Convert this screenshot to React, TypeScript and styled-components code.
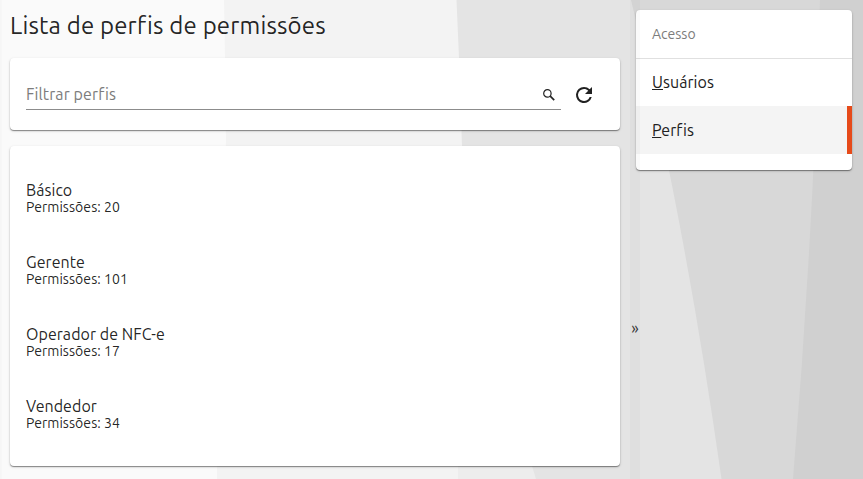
import React from "react";
import styled, { createGlobalStyle, css } from "styled-components";

const GlobalStyle = createGlobalStyle`
  *, *::before, *::after { box-sizing: border-box; }
  html, body { margin: 0; height: 100%; overflow: hidden; }
  body {
    font-family: Ubuntu, "Noto Sans", sans-serif;
    font-weight: 400;
    color: rgba(0, 0, 0, 0.87);
    background: #fafafa;
  }
`;

const Page = styled.div`
  position: relative;
  display: flex;
  width: 863px;
  height: 479px;
  overflow: hidden;
`;

const Backdrop = styled.svg`
  position: absolute;
  inset: 0;
  z-index: -1;
`;

const Main = styled.main`
  display: flex;
  flex-direction: column;
  flex: 0 0 630px;
  padding: 0 10px;
  gap: 16px;
  box-shadow: inset 2px 0 1px rgba(0, 0, 0, 0.015);
`;

const Splitter = styled.button`
  flex: 0 0 10px;
  display: flex;
  align-items: center;
  justify-content: center;
  z-index: 1;
  padding: 177px 0 0;
  border: 0;
  background: rgba(0, 0, 0, 0.018);
  color: #333;
  font: 16px/1 Ubuntu, "Noto Sans", sans-serif;
`;

const Aside = styled.aside`
  flex: 0 0 216px;
  margin: 10px 0 0 -4px;
`;

const Title = styled.h1`
  margin: 0;
  height: 42px;
  font-size: 24px;
  font-weight: 400;
  line-height: 51px;
  letter-spacing: 0.17px;
  white-space: nowrap;
`;

const Card = styled.section`
  background: #fff;
  border-radius: 4px;
  box-shadow: 0 1px 1px rgba(0, 0, 0, 0.4), 0 1px 3px rgba(0, 0, 0, 0.16);
`;

const FilterCard = styled(Card)`
  display: flex;
  height: 72px;
  padding: 20px 16px;
`;

const Field = styled.label`
  display: flex;
  align-items: center;
  width: 535px;
  height: 32px;
  padding: 2px 6px 0 0;
  border-bottom: 1px solid #8c8c8c;
`;

const FilterInput = styled.input`
  flex: 1;
  min-width: 0;
  margin-top: -2px;
  padding: 0;
  border: 0;
  outline: 0;
  background: transparent;
  font: 400 16px/20px Ubuntu, "Noto Sans", sans-serif;
  letter-spacing: 0.1px;
  &::placeholder { color: #7c7c7c; opacity: 1; }
`;

const RefreshButton = styled.button`
  display: flex;
  width: 24px;
  height: 24px;
  margin: 5px 0 0 11px;
  padding: 0;
  border: 0;
  background: none;
  color: #212121;
`;

const ProfileList = styled(Card).attrs({ as: "ul" })`
  margin: 0;
  height: 320px;
  padding: 16px;
  list-style: none;
`;

const Profile = styled.li`
  display: flex;
  flex-direction: column;
  justify-content: center;
  height: 72px;
`;

const ProfileName = styled.span`
  font-size: 16px;
  line-height: 17px;
  letter-spacing: 0.05px;
`;

const ProfileCount = styled.span`
  font-size: 14px;
  line-height: 16px;
  letter-spacing: 0.05px;
`;

const MenuCard = styled(Card)`
  height: 160px;
`;

const MenuHeader = styled.div`
  height: 49px;
  padding: 0 16px;
  border-bottom: 1px solid #e0e0e0;
  color: #7c7c7c;
  font-size: 14px;
  line-height: 48px;
`;

const MenuItem = styled.a<{ $active?: boolean }>`
  display: block;
  height: 48px;
  padding: 0 16px;
  color: #212121;
  font-size: 16px;
  line-height: 48px;
  letter-spacing: 0.05px;
  ${({ $active }) =>
    $active
      ? css`
          background: #f4f4f4;
          border-right: 5px solid #e64a19;
        `
      : css`
          height: 47px;
          line-height: 47px;
        `}
`;

const profiles = [
  { name: "Básico", count: 20 },
  { name: "Gerente", count: 101 },
  { name: "Operador de NFC-e", count: 17 },
  { name: "Vendedor", count: 34 },
];

export default function App() {
  return (
    <Page>
      <GlobalStyle />
      <Backdrop width="863" height="479" aria-hidden="true">
        <path fill="#fafafa" d="M0 0h863v479H0z" />
        <path fill="#f3f3f3" d="M224 0L225 58L226 140L217 470V479H863V0z" />
        <path fill="#ededed" d="M458 440H560V479H458z" />
        <path fill="#e4e4e4" d="M456.5 0L459 58L462 146L532 466L536 479H863V0z" />
        <path fill="#d8d8d8" d="M631 0Q684 215 721.5 479H863V0z" />
        <path fill="#d0d0d0" d="M820 0Q813 240 793 479H863V0z" />
      </Backdrop>
      <Main>
        <Title>Lista de perfis de permissões</Title>
        <FilterCard>
          <Field>
            <FilterInput placeholder="Filtrar perfis" />
            <svg width="12" height="12" viewBox="0 0 12 12" fill="none" stroke="#222">
              <circle cx="4.4" cy="4.4" r="3.7" strokeWidth="1.2" />
              <path d="M7.2 7.2L11.2 11.2" strokeWidth="1.7" />
            </svg>
          </Field>
          <RefreshButton aria-label="Atualizar">
            <svg width="24" height="24" viewBox="0 0 24 24" fill="currentColor">
              <path d="M17.65 6.35A7.958 7.958 0 0 0 12 4a8 8 0 1 0 7.73 10h-2.08A6 6 0 1 1 12 6c1.66 0 3.14.69 4.22 1.78L13 11h7V4z" />
            </svg>
          </RefreshButton>
        </FilterCard>
        <ProfileList>
          {profiles.map((p) => (
            <Profile key={p.name}>
              <ProfileName>{p.name}</ProfileName>
              <ProfileCount>Permissões: {p.count}</ProfileCount>
            </Profile>
          ))}
        </ProfileList>
      </Main>
      <Splitter>»</Splitter>
      <Aside>
        <MenuCard as="nav">
          <MenuHeader>Acesso</MenuHeader>
          <MenuItem><u>U</u>suários</MenuItem>
          <MenuItem $active><u>P</u>erfis</MenuItem>
        </MenuCard>
      </Aside>
    </Page>
  );
}
